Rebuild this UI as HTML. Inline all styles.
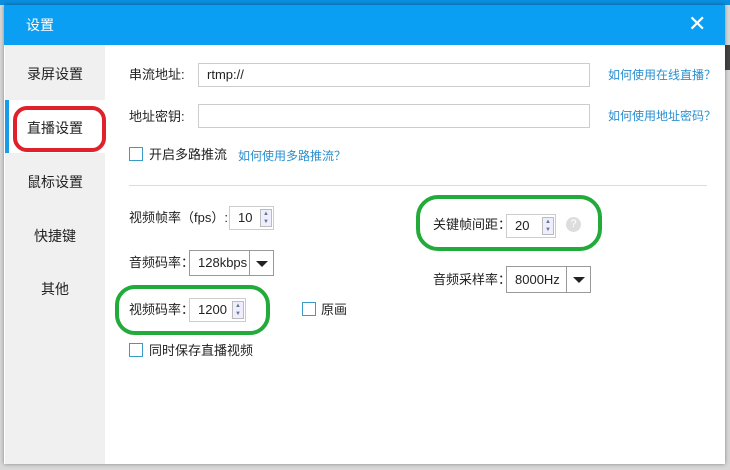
<!DOCTYPE html><html><head><meta charset="utf-8"><style>
*{margin:0;padding:0;box-sizing:border-box}
body{width:730px;height:470px;background:#d8d8d8;position:relative;overflow:hidden;font-family:"Liberation Sans","Noto Sans CJK SC",sans-serif;font-size:13px;color:#222;line-height:16px}
.a{position:absolute}
.dlg{left:4px;top:5px;width:721px;height:459px;background:#fff;box-shadow:0 0 4px rgba(0,0,0,.4)}
.title{left:4px;top:5px;width:721px;height:40px;background:#0a9ff2;color:#fff;font-size:14px}
.side{left:5px;top:45px;width:100px;height:419px;background:#f0f0f0}
.tab{position:absolute;left:0;width:100px;text-align:center;font-size:14px;color:#222}
.inp{position:absolute;border:1px solid #ccc;background:#fff;height:24px;display:flex;align-items:center;padding-left:8px;font-size:13px}
.lnk{position:absolute;color:#2a8fd0;font-size:12px}
.cb{position:absolute;width:14px;height:14px;border:1px solid #3a9ac8;background:#fff}
.spin{position:absolute;right:1px;top:2px;width:12px;height:18px;border:1px solid #bbb;background:#eef;font-size:6px;color:#678;text-align:center;line-height:8px}
.dd{position:absolute;right:0;top:0;width:24px;height:100%;border-left:1px solid #999}
.dd:after{content:"";position:absolute;left:6px;top:10px;border:6px solid transparent;border-top:6px solid #222;border-bottom:0}
</style></head><body>
<div class="a" style="left:0;top:0;width:730px;height:5px;background:#0a8fe0"></div>
<div class="a" style="left:725px;top:45px;width:5px;height:25px;background:#444"></div>
<div class="a dlg"></div>
<div class="a title"><span class="a" style="left:22px;top:12px">设置</span><span class="a" style="left:684px;top:7px;font-size:22px;line-height:24px">✕</span></div>
<div class="a side">
<div class="tab" style="top:21px">录屏设置</div>
<div class="a" style="left:0;top:55px;width:100px;height:53px;background:#fff"></div>
<div class="a" style="left:0;top:55px;width:4px;height:53px;background:#1a9be8"></div>
<div class="tab" style="top:75px">直播设置</div>
<div class="tab" style="top:129px">鼠标设置</div>
<div class="tab" style="top:183px">快捷键</div>
<div class="tab" style="top:236px">其他</div>
</div>
<div class="a" style="left:13px;top:106px;width:93px;height:46px;border:4px solid #e0202a;border-radius:14px"></div>
<span class="a" style="left:129px;top:67px">串流地址:</span>
<div class="inp" style="left:198px;top:63px;width:392px">rtmp://</div>
<span class="lnk" style="left:608px;top:67px">如何使用在线直播？</span>
<span class="a" style="left:129px;top:109px">地址密钥:</span>
<div class="inp" style="left:198px;top:104px;width:392px"></div>
<span class="lnk" style="left:608px;top:108px">如何使用地址密码？</span>
<div class="cb" style="left:129px;top:147px"></div>
<span class="a" style="left:149px;top:147px">开启多路推流</span>
<span class="lnk" style="left:238px;top:148px">如何使用多路推流？</span>
<div class="a" style="left:129px;top:185px;width:578px;height:1px;background:#ddd"></div>
<span class="a" style="left:129px;top:210px">视频帧率（fps）:</span>
<div class="inp" style="left:229px;top:206px;width:45px">10<div class="spin">▲<br>▼</div></div>
<span class="a" style="left:129px;top:255px">音频码率：</span>
<div class="inp" style="left:189px;top:250px;width:85px;height:26px;border-color:#999">128kbps<div class="dd"></div></div>
<span class="a" style="left:129px;top:302px">视频码率：</span>
<div class="inp" style="left:189px;top:298px;width:57px">1200<div class="spin">▲<br>▼</div></div>
<div class="cb" style="left:302px;top:302px"></div>
<span class="a" style="left:321px;top:302px">原画</span>
<div class="cb" style="left:129px;top:343px"></div>
<span class="a" style="left:149px;top:343px">同时保存直播视频</span>
<span class="a" style="left:433px;top:217px">关键帧间距：</span>
<div class="inp" style="left:506px;top:214px;width:50px">20<div class="spin">▲<br>▼</div></div>
<div class="a" style="left:566px;top:217px;width:15px;height:15px;border-radius:50%;background:#ddd;color:#fff;font-size:11px;text-align:center;line-height:15px">?</div>
<span class="a" style="left:433px;top:272px">音频采样率：</span>
<div class="inp" style="left:506px;top:266px;width:85px;height:27px;border-color:#999">8000Hz<div class="dd"></div></div>
<div class="a" style="left:416px;top:195px;width:186px;height:56px;border:4px solid #22aa3a;border-radius:22px"></div>
<div class="a" style="left:115px;top:285px;width:155px;height:50px;border:4px solid #22aa3a;border-radius:20px"></div>
</body></html>
